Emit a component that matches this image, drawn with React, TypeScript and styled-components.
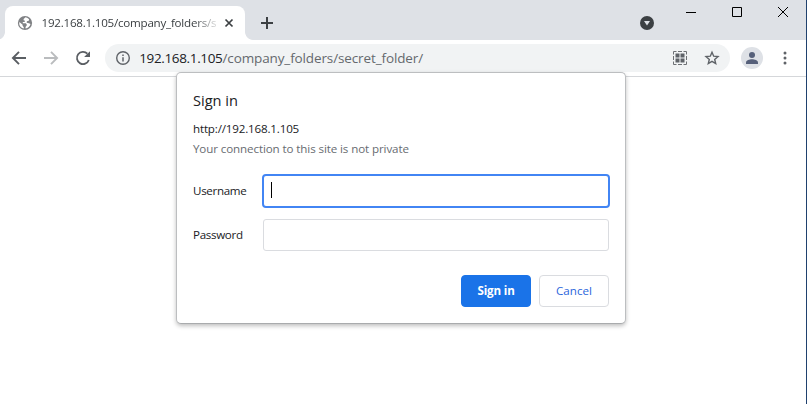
import React from 'react';
import styled, { createGlobalStyle } from 'styled-components';

const GlobalStyle = createGlobalStyle`
  * { box-sizing: border-box; }
  body { margin: 0; background: #fff; font-family: "Open Sans", "Noto Sans", sans-serif; }
  button, input { font-family: inherit; }
`;

const Window = styled.div`
  position: relative;
  display: flex;
  flex-direction: column;
  width: 807px;
  height: 404px;
  overflow: hidden;
  background: #fff;
  border-right: 1px solid #1f416e;
`;

const TabStrip = styled.header`
  display: flex;
  align-items: flex-start;
  flex: none;
  height: 40px;
  padding-left: 5px;
  background: #dee1e6;
`;

const Tab = styled.div`
  position: relative;
  display: flex;
  align-items: center;
  flex: none;
  width: 240px;
  height: 34px;
  margin-top: 6px;
  padding: 0 8px 0 12px;
  background: #fff;
  border-radius: 8px 8px 0 0;
`;

const TabFoot = styled.span<{ $side: 'left' | 'right' }>`
  position: absolute;
  bottom: 0;
  ${(p) => p.$side}: -8px;
  width: 8px;
  height: 8px;
  background: radial-gradient(
    circle at ${(p) => (p.$side === 'left' ? '0 0' : '100% 0')},
    transparent 7.5px,
    #fff 8.2px
  );
`;

const Icon = styled.svg`
  display: block;
  flex: none;
`;

const TabTitle = styled.span`
  width: 179px;
  margin-left: 8.5px;
  margin-right: auto;
  white-space: nowrap;
  font-size: 11.6px;
  line-height: 18px;
  letter-spacing: -0.23px;
  color: #3c4043;
  mask-image: linear-gradient(to right, #000 152px, transparent 179px);
`;

const IconButton = styled.button<{ $w: number; $h: number }>`
  display: flex;
  align-items: center;
  justify-content: center;
  flex: none;
  width: ${(p) => p.$w}px;
  height: ${(p) => p.$h}px;
  padding: 0;
  border: 0;
  background: none;
`;

const WindowControls = styled.div`
  display: flex;
  margin-left: auto;
`;

const TabSearch = styled.div`
  display: flex;
  align-items: center;
  width: 28px;
  height: 46px;
`;

const Toolbar = styled.nav`
  display: flex;
  align-items: center;
  flex: none;
  height: 37px;
  padding-left: 3px;
  border-bottom: 1px solid #d5d7da;
`;

const Omnibox = styled.div`
  display: flex;
  align-items: center;
  flex: none;
  width: 625px;
  height: 28px;
  margin-left: 6px;
  padding: 0 2px 0 11px;
  border-radius: 14px;
  background: #f1f3f4;
`;

const Url = styled.span`
  margin-left: 9.2px;
  margin-right: auto;
  font-size: 13.5px;
  line-height: 20px;
  letter-spacing: -0.12px;
  color: #65696e;
  white-space: nowrap;
`;

const Host = styled.span`
  letter-spacing: -0.35px;
  color: #202124;
`;

const StarSlot = styled.div`
  margin-left: 9px;
`;

const Avatar = styled.div`
  display: flex;
  align-items: center;
  justify-content: center;
  flex: none;
  width: 22px;
  height: 22px;
  margin-left: 11px;
  border-radius: 50%;
  background: #dee1e6;
`;

const Dialog = styled.form`
  position: absolute;
  top: 72px;
  left: 176px;
  display: flex;
  flex-direction: column;
  width: 450px;
  height: 252px;
  padding: 17px 16px 16px;
  border: 1px solid #bcbec0;
  border-bottom-color: #a9abad;
  border-radius: 5px;
  background: #fff;
  box-shadow: 0 2px 4px rgba(0, 0, 0, 0.25);
`;

const Heading = styled.h1`
  margin: 0;
  font-size: 14.6px;
  line-height: 20px;
  font-weight: 400;
  color: #202124;
`;

const Line = styled.p<{ $muted?: boolean }>`
  margin: ${(p) => (p.$muted ? '2px' : '10px')} 0 0;
  font-size: 11.6px;
  line-height: 18px;
  letter-spacing: ${(p) => (p.$muted ? '-0.11px' : '-0.17px')};
  color: ${(p) => (p.$muted ? '#686c71' : '#202124')};
`;

const Field = styled.label`
  display: flex;
  align-items: center;
  height: 34px;
  margin-top: 10px;
  font-size: 11.6px;
  letter-spacing: -0.32px;
  color: #202124;
`;

const FieldName = styled.span`
  width: 69px;
  padding-bottom: 2px;
`;

const Input = styled.span<{ $focused?: boolean }>`
  display: flex;
  align-items: center;
  width: ${(p) => (p.$focused ? 348 : 346)}px;
  height: ${(p) => (p.$focused ? 34 : 32)}px;
  margin-left: ${(p) => (p.$focused ? 0 : 1)}px;
  padding-left: 7px;
  border: ${(p) => (p.$focused ? '2px solid #4285f4' : '1px solid #dadce0')};
  border-radius: ${(p) => (p.$focused ? 4 : 3)}px;
`;

const Caret = styled.span`
  width: 1px;
  height: 16px;
  margin-bottom: 2px;
  background: #000;
`;

const Fields = styled.div`
  display: flex;
  flex-direction: column;
  margin-top: 6px;
  margin-right: -1px;
`;

const Actions = styled.div`
  display: flex;
  justify-content: flex-end;
  gap: 8px;
  margin-top: auto;
`;

const ActionButton = styled.button<{ $primary?: boolean }>`
  width: 70px;
  height: 32px;
  padding: 0 0 1px;
  border: 1px solid ${(p) => (p.$primary ? '#1a73e8' : '#dadce0')};
  border-radius: 4px;
  background: ${(p) => (p.$primary ? '#1a73e8' : '#fff')};
  color: ${(p) => (p.$primary ? '#fff' : '#2a66dc')};
  font-size: 11.6px;
  font-weight: ${(p) => (p.$primary ? 700 : 500)};
  letter-spacing: ${(p) => (p.$primary ? '-0.15px' : '0')};
`;

export default function App() {
  return (
    <>
      <GlobalStyle />
      <Window>
        <TabStrip>
          <Tab>
            <TabFoot $side="left" />
            <TabFoot $side="right" />
            <Icon width="16" height="16" viewBox="0 0 16 16">
              <circle cx="8" cy="8" r="7.1" fill="#808285" />
              <path d="M8.600 2.300 6.600 4v1.300l1.400.400-.400 1.300H5.800v1.200h3l.900 1.100v1.200l-1.200 1.500.100 1.400C11 13.200 12.900 11.400 13.500 9L12 8.300l-2.300-.500.200-1.500 1.900-.600.300-1.400A5.800 5.800 0 0 0 8.600 2.300ZM2.400 7 2.200 9a6 6 0 0 0 4.600 4.600v-1.400L5.600 10.800V9.700Z" fill="#fff" />
            </Icon>
            <TabTitle>192.168.1.105/company_folders/s</TabTitle>
            <IconButton $w={16} $h={34} type="button" aria-label="Close tab">
              <Icon width="16" height="16" viewBox="0 0 16 16">
                <path d="M4.500 4.500l7 7M11.500 4.500l-7 7" stroke="#3c4043" strokeWidth="1.700" />
              </Icon>
            </IconButton>
          </Tab>
          <IconButton $w={44} $h={46} type="button" aria-label="New tab">
            <Icon width="14" height="14" viewBox="0 0 14 14">
              <path d="M7 1v12M1 7h12" stroke="#3c4043" strokeWidth="2" />
            </Icon>
          </IconButton>
          <WindowControls>
            <TabSearch>
              <Icon width="14" height="14" viewBox="0 0 14 14">
                <circle cx="7" cy="7" r="7" fill="#3c4043" />
                <path d="M4 5h6L7 9.500Z" fill="#dee1e6" />
              </Icon>
            </TabSearch>
            <IconButton $w={46} $h={24} type="button" aria-label="Minimize">
              <Icon width="10" height="10" viewBox="0 0 10 10">
                <path d="M0 5.500h10" stroke="#000" />
              </Icon>
            </IconButton>
            <IconButton $w={46} $h={24} type="button" aria-label="Maximize">
              <Icon width="10" height="10" viewBox="0 0 10 10">
                <path d="M.5 .5h9v9h-9Z" fill="none" stroke="#000" />
              </Icon>
            </IconButton>
            <IconButton $w={46} $h={24} type="button" aria-label="Close">
              <Icon width="10" height="10" viewBox="0 0 10 10">
                <path d="M0 0l10 10M10 0 0 10" stroke="#000" />
              </Icon>
            </IconButton>
          </WindowControls>
        </TabStrip>

        <Toolbar>
          <IconButton $w={32} $h={32} type="button" aria-label="Back">
            <Icon width="16" height="16" viewBox="0 0 16 16">
              <path d="M15 8H2.500M8 1.800 1.900 8 8 14.200" fill="none" stroke="#5a5e63" strokeWidth="1.900" />
            </Icon>
          </IconButton>
          <IconButton $w={32} $h={32} type="button" aria-label="Forward">
            <Icon width="16" height="16" viewBox="0 0 16 16">
              <path d="M1 8h12.500M8 1.800 14.100 8 8 14.200" fill="none" stroke="#babcbe" strokeWidth="1.900" />
            </Icon>
          </IconButton>
          <IconButton $w={32} $h={32} type="button" aria-label="Reload">
            <Icon width="16" height="16" viewBox="0 0 16 16">
              <path d="M13.800 10A6.100 6.100 0 1 1 12.400 3.700" fill="none" stroke="#5a5e63" strokeWidth="1.800" />
              <path d="M15 1.200v5.900H9.100Z" fill="#5a5e63" />
            </Icon>
          </IconButton>
          <Omnibox>
            <Icon width="14" height="14" viewBox="0 0 14 14">
              <circle cx="7" cy="7" r="6.300" fill="none" stroke="#5f6368" strokeWidth="1.400" />
              <path d="M7 6.200v4.300M7 3.500v1.500" stroke="#5f6368" strokeWidth="1.500" />
            </Icon>
            <Url>
              <Host>192.168.1.105</Host>/company_folders/secret_folder/
            </Url>
            <Icon width="14" height="14" viewBox="0 0 14 14">
              <path d="M.500 3.500V.500H3.500M5 .500h4M10.500.500h3v3M13.500 5v4M13.500 10.500v3h-3M9 13.500H5M3.500 13.500h-3v-3M.500 9V5" fill="none" stroke="#6d7074" />
              <path d="M2.500 2.500h4v4h-4ZM7.500 2.500h4v4h-4ZM2.500 7.500h4v4h-4ZM7.500 7.500h4v4h-4Z" fill="#5f6368" />
            </Icon>
            <StarSlot>
              <IconButton $w={32} $h={28} type="button" aria-label="Bookmark">
                <Icon width="16" height="16" viewBox="0 0 16 16">
                  <path d="m8 2.200 1.700 4 4.300.400-3.300 2.800 1 4.200L8 11.300l-3.700 2.300 1-4.200L2 6.600l4.300-.400Z" fill="none" stroke="#5f6368" strokeWidth="1.400" />
                </Icon>
              </IconButton>
            </StarSlot>
          </Omnibox>
          <Avatar>
            <Icon width="14" height="14" viewBox="0 0 14 14">
              <circle cx="7" cy="4" r="3" fill="#56607a" />
              <path d="M1 13v-1.500C1 9.400 4.500 8.300 7 8.300s6 1.100 6 3.200V13Z" fill="#56607a" />
            </Icon>
          </Avatar>
          <IconButton $w={43} $h={32} type="button" aria-label="Menu">
            <Icon width="4" height="14" viewBox="0 0 4 14">
              <circle cx="2" cy="2" r="1.500" fill="#5f6368" />
              <circle cx="2" cy="7" r="1.500" fill="#5f6368" />
              <circle cx="2" cy="12" r="1.500" fill="#5f6368" />
            </Icon>
          </IconButton>
        </Toolbar>

        <Dialog>
          <Heading>Sign in</Heading>
          <Line>http://192.168.1.105</Line>
          <Line $muted>Your connection to this site is not private</Line>
          <Fields>
            <Field>
              <FieldName>Username</FieldName>
              <Input $focused>
                <Caret />
              </Input>
            </Field>
            <Field>
              <FieldName>Password</FieldName>
              <Input />
            </Field>
          </Fields>
          <Actions>
            <ActionButton $primary type="button">Sign in</ActionButton>
            <ActionButton type="button">Cancel</ActionButton>
          </Actions>
        </Dialog>
      </Window>
    </>
  );
}
